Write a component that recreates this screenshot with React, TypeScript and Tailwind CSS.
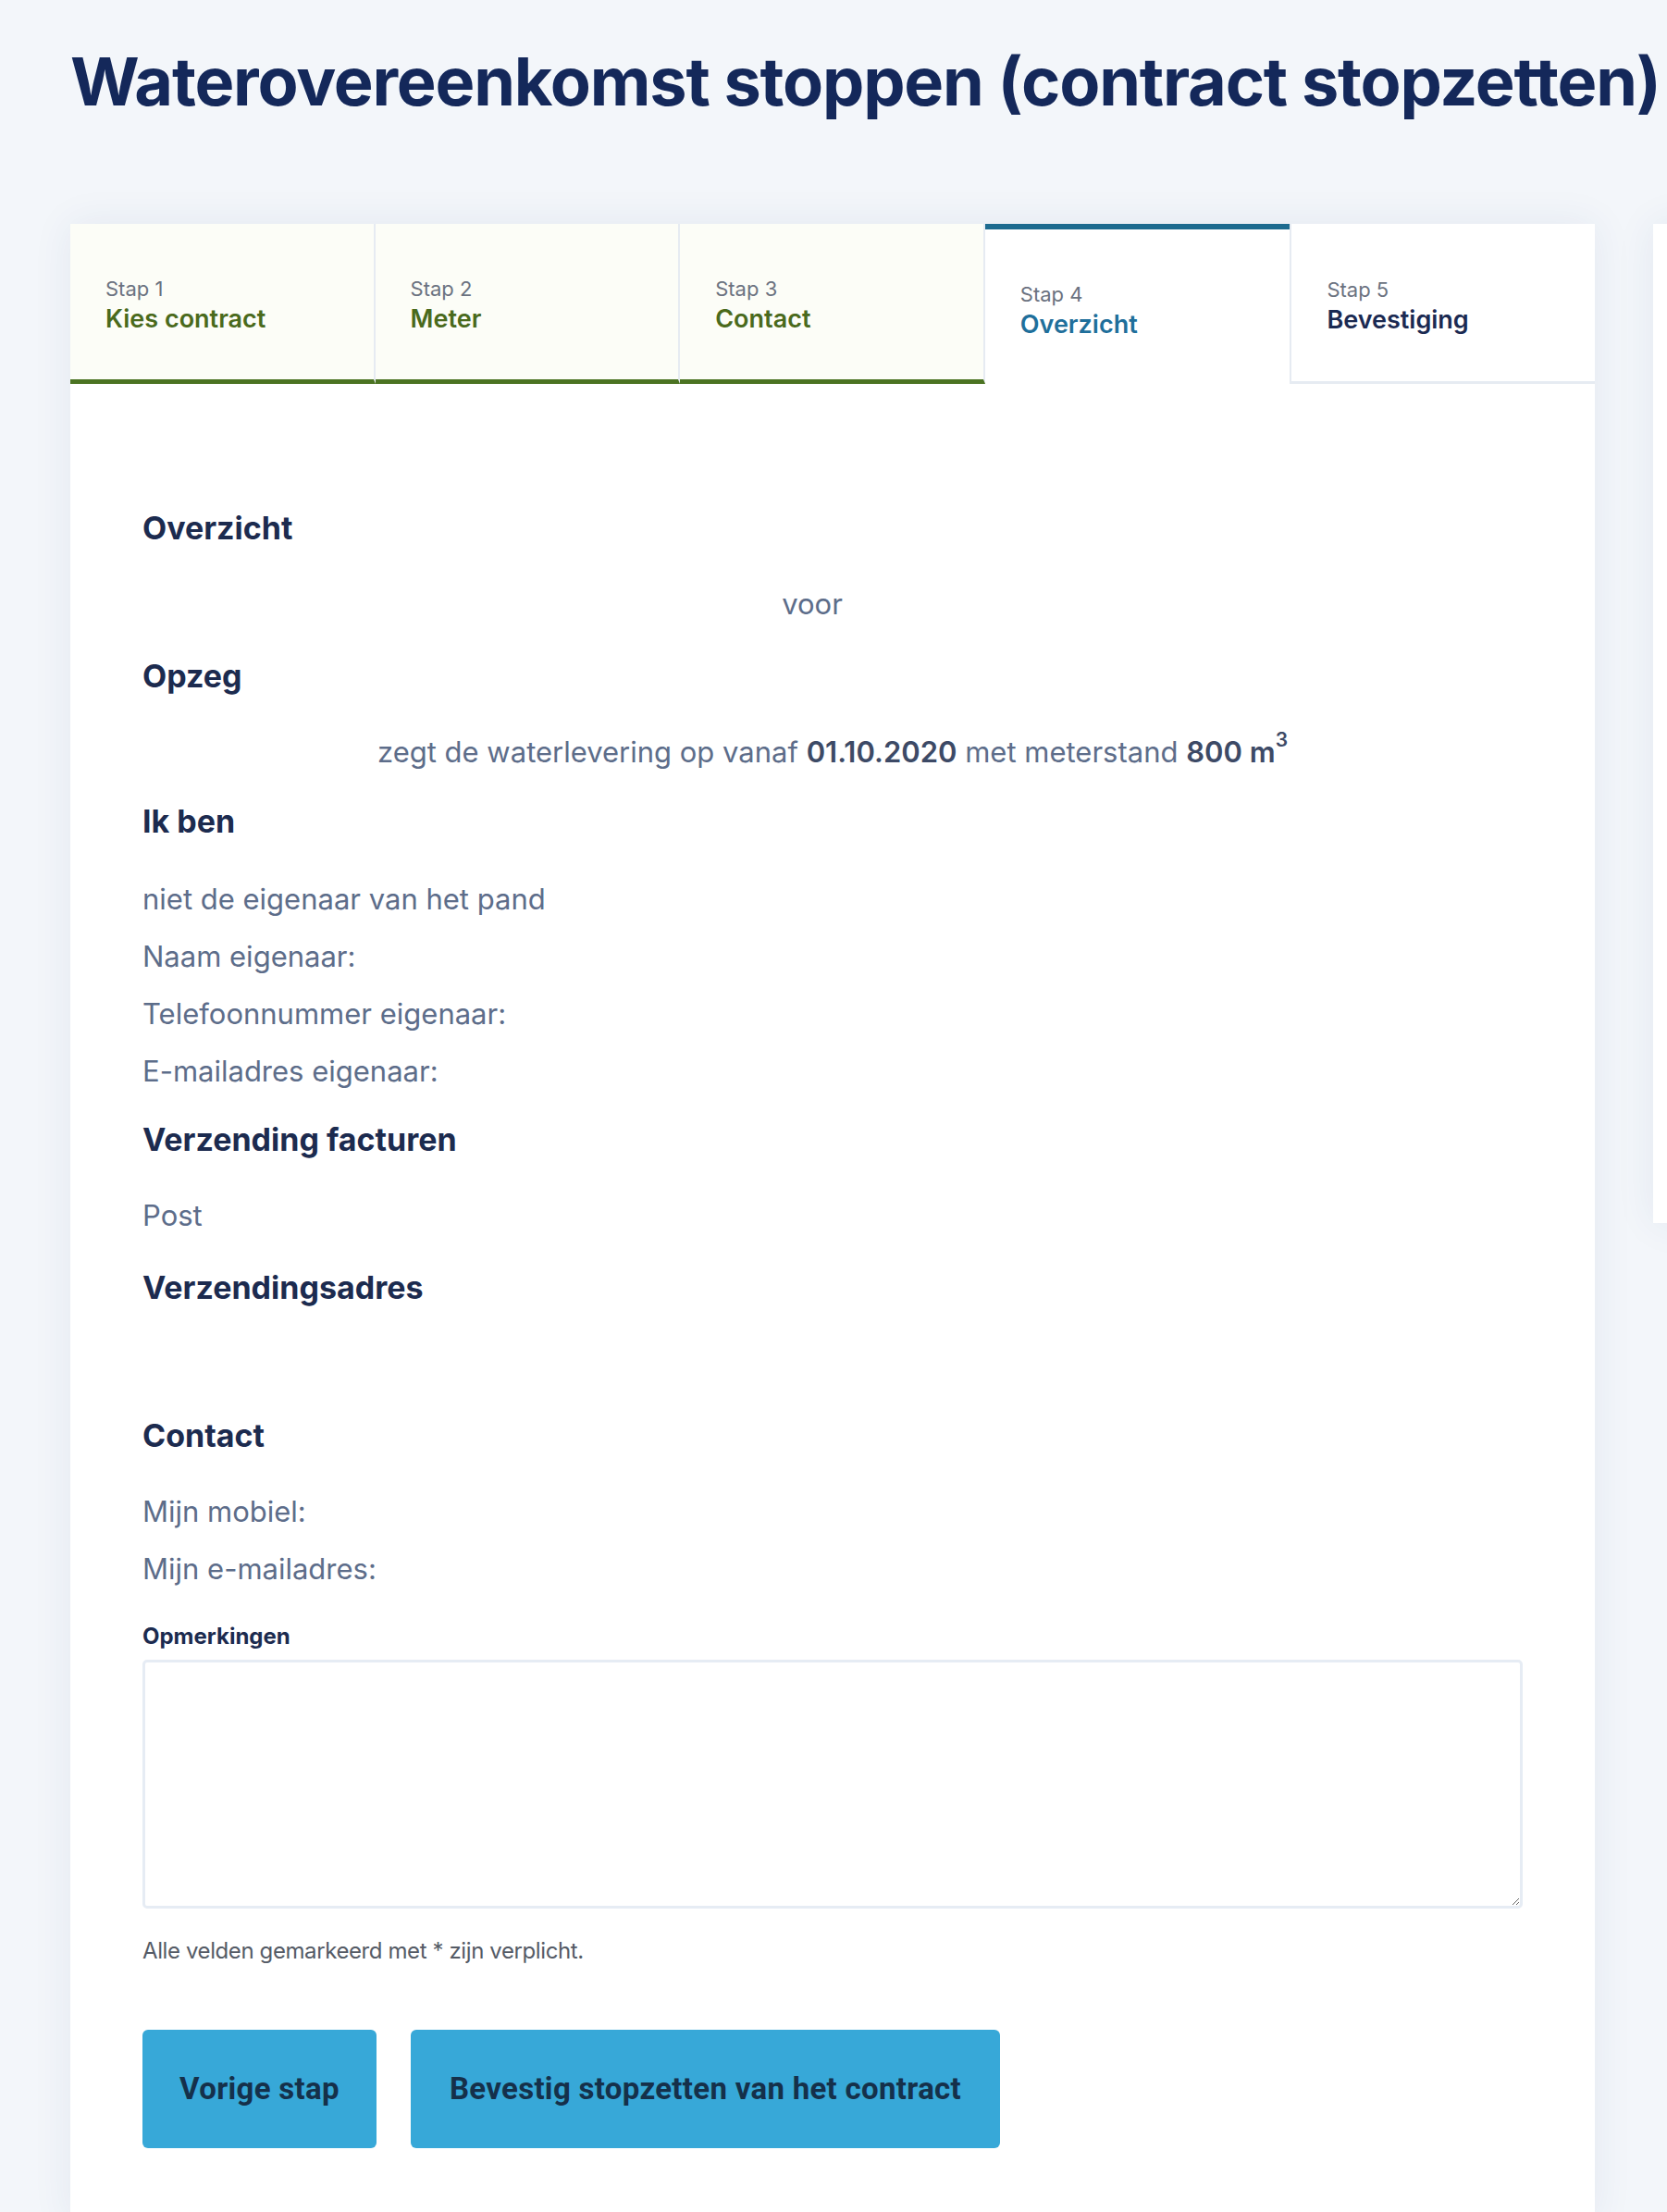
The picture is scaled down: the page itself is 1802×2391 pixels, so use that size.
import React from "react";

const steps = [
  { nr: 1, label: "Kies contract", state: "done" },
  { nr: 2, label: "Meter", state: "done" },
  { nr: 3, label: "Contact", state: "done" },
  { nr: 4, label: "Overzicht", state: "active" },
  { nr: 5, label: "Bevestiging", state: "todo" },
];

const StepTab: React.FC<{ nr: number; label: string; state: string }> = ({ nr, label, state }) => {
  if (state === "done") {
    return (
      <div className="h-[173px] flex flex-col justify-center pl-[38px] pt-[8px] bg-[#fcfdf7] border-b-[5px] border-b-[#4b7322] border-r-2 border-r-[#e6ebf2]">
        <span className="text-[22px] leading-[26px] text-[#6b7280]">Stap {nr}</span>
        <span className="mt-[4px] text-[27px] leading-[32px] font-semibold text-[#4a6a1c]">{label}</span>
      </div>
    );
  }
  if (state === "active") {
    return (
      <div className="h-[173px] flex flex-col justify-center pl-[38px] pt-[8px] bg-white border-t-[6px] border-t-[#1d6b8f]">
        <span className="text-[22px] leading-[26px] text-[#6b7280]">Stap {nr}</span>
        <span className="mt-[4px] text-[27px] leading-[32px] font-semibold text-[#1f6f9b]">{label}</span>
      </div>
    );
  }
  return (
    <div className="h-[173px] flex flex-col justify-center pl-[38px] pt-[8px] bg-white border-b-[3px] border-b-[#e6ebf2] border-l-2 border-l-[#e6ebf2]">
      <span className="text-[22px] leading-[26px] text-[#6b7280]">Stap {nr}</span>
      <span className="mt-[4px] text-[27px] leading-[32px] font-semibold text-[#1b2a52]">{label}</span>
    </div>
  );
};

const Heading: React.FC<{ className?: string; children: React.ReactNode }> = ({ className = "", children }) => (
  <h2 className={`text-[34px] leading-[40px] font-bold text-[#1c2b4f] ${className}`}>{children}</h2>
);

const Line: React.FC<{ className?: string; children?: React.ReactNode }> = ({ className = "", children }) => (
  <p className={`text-[31px] leading-[40px] text-[#5d6d8a] ${className}`}>{children}</p>
);

export default function App() {
  return (
    <div
      className="min-h-screen bg-[#f3f6fa] overflow-hidden pl-[76px] pt-[45px]"
      style={{ fontFamily: "Inter, 'Liberation Sans', sans-serif" }}
    >
      <h1 className="text-[72px] leading-[86px] font-bold text-[#14285a] whitespace-nowrap tracking-[-1.2px]">
        Waterovereenkomst stoppen (contract stopzetten)
      </h1>

      <div className="mt-[111px] flex items-start gap-[63px]">
        <div className="w-[1648px] shrink-0 bg-white shadow-[0_0_40px_rgba(40,70,130,0.08)]">
          <div className="grid grid-cols-5">
            {steps.map((s) => (
              <StepTab key={s.nr} nr={s.nr} label={s.label} state={s.state} />
            ))}
          </div>

          <div className="px-[78px] pt-[136px] pb-[80px]">
            <Heading>Overzicht</Heading>
            <Line className="mt-[42px] text-center pr-[44px]">voor</Line>

            <Heading className="mt-[38px]">Opzeg</Heading>
            <Line className="mt-[42px] text-center">
              zegt de waterlevering op vanaf{" "}
              <span className="font-semibold text-[#3d4a66]">01.10.2020</span> met meterstand{" "}
              <span className="font-semibold text-[#3d4a66]">
                800 m<span className="inline-block align-top text-[21px] leading-[21px] -translate-y-[4px]">3</span>
              </span>
            </Line>

            <Heading className="mt-[35px]">Ik ben</Heading>
            <div className="mt-[44px] flex flex-col gap-[22px]">
              <Line>niet de eigenaar van het pand</Line>
              <Line>Naam eigenaar:</Line>
              <Line>Telefoonnummer eigenaar:</Line>
              <Line>E-mailadres eigenaar:</Line>
            </div>

            <Heading className="mt-[34px]">Verzending facturen</Heading>
            <Line className="mt-[42px]">Post</Line>

            <Heading className="mt-[38px]">Verzendingsadres</Heading>
            <div className="mt-[42px] h-[40px]" />

            <Heading className="mt-[38px]">Contact</Heading>
            <div className="mt-[42px] flex flex-col gap-[22px]">
              <Line>Mijn mobiel:</Line>
              <Line>Mijn e-mailadres:</Line>
            </div>

            <label className="mt-[39px] block text-[24px] leading-[28px] font-bold text-[#1c2b4f]">
              Opmerkingen
            </label>
            <textarea className="mt-[11px] block w-full h-[269px] border-[3px] border-[#e6ecf4] rounded-[5px] bg-white outline-none p-3 text-[24px]" />

            <p className="mt-[32px] text-[24px] leading-[28px] text-[#555b66] tracking-[-0.4px]">
              Alle velden gemarkeerd met * zijn verplicht.
            </p>

            <div
              className="mt-[71px] flex gap-[37px]"
              style={{ fontFamily: "Roboto, 'Liberation Sans', sans-serif" }}
            >
              <button className="w-[253px] h-[128px] rounded-[6px] bg-[#37a8d8] text-[33px] font-bold text-[#15304a] tracking-[0.3px]">
                Vorige stap
              </button>
              <button className="w-[637px] h-[128px] rounded-[6px] bg-[#37a8d8] text-[33px] font-bold text-[#15304a] tracking-[0.3px]">
                Bevestig stopzetten van het contract
              </button>
            </div>
          </div>
        </div>

        <div className="w-[400px] h-[1080px] shrink-0 bg-white shadow-[0_0_40px_rgba(40,70,130,0.08)]" />
      </div>
    </div>
  );
}
